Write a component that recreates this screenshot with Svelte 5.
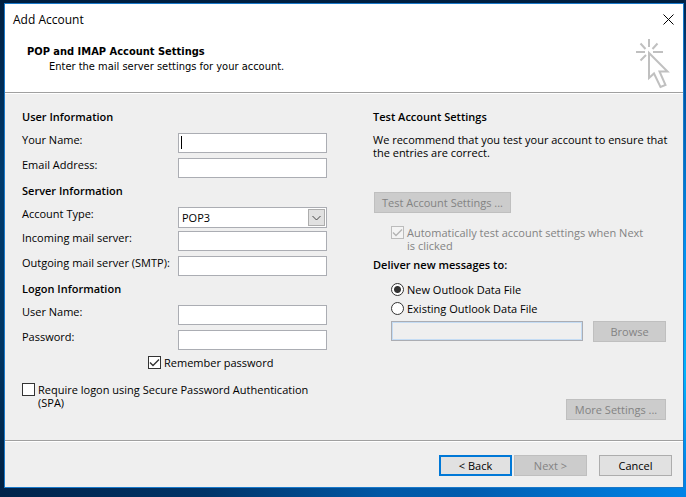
<script>
    let form = $state({
        name: '',
        email: '',
        type: 'POP3',
        incoming: '',
        outgoing: '',
        user: '',
        password: '',
        remember: true,
        spa: false,
        autoTest: true,
        deliver: 'new',
        dataFile: ''
    });
</script>

{#snippet tick()}
    <svg class="tick" viewBox="0 0 13 13" aria-hidden="true">
        <path d="M2 6.5L5 9.5L11 3.5" />
    </svg>
{/snippet}

<div class="desktop">
    <main class="dialog">
        <header class="top">
            <div class="title-bar">
                <h1>Add Account</h1>
                <button class="close" type="button" aria-label="Close">
                    <svg viewBox="0 0 11 11"><path d="M0.5 0.5L10.5 10.5M10.5 0.5L0.5 10.5" /></svg>
                </button>
            </div>
            <div class="banner">
                <div class="intro">
                    <h2>POP and IMAP Account Settings</h2>
                    <p>Enter the mail server settings for your account.</p>
                </div>
                <svg class="pointer" viewBox="0 0 34 50" aria-hidden="true">
                    <path d="M13 0V8M0 13H9M17 13H27M4.5 4.5L9.5 10M21.5 4.5L16.5 10M4.5 21.5L10 16" />
                    <path d="M13 14V39L18 34.5L24.5 48L29.5 46L23.5 32.5H31.5Z" />
                </svg>
            </div>
        </header>

        <form class="settings">
            <div class="column">
                <h3>User Information</h3>
                <div class="field">
                    <label for="name">Your Name:</label>
                    <input class="text caret" id="name" type="text" bind:value={form.name} />
                </div>
                <div class="field">
                    <label for="email">Email Address:</label>
                    <input class="text" id="email" type="text" bind:value={form.email} />
                </div>

                <h3>Server Information</h3>
                <div class="field type">
                    <label for="type">Account Type:</label>
                    <div class="select">
                        <select id="type" bind:value={form.type}>
                            <option>POP3</option>
                            <option>IMAP</option>
                        </select>
                        <span class="arrow">
                            <svg viewBox="0 0 9 6" aria-hidden="true"><path d="M0.5 1L4.5 5L8.5 1" /></svg>
                        </span>
                    </div>
                </div>
                <div class="field">
                    <label for="incoming">Incoming mail server:</label>
                    <input class="text" id="incoming" type="text" bind:value={form.incoming} />
                </div>
                <div class="field">
                    <label for="outgoing">Outgoing mail server (SMTP):</label>
                    <input class="text" id="outgoing" type="text" bind:value={form.outgoing} />
                </div>

                <h3>Logon Information</h3>
                <div class="field">
                    <label for="user">User Name:</label>
                    <input class="text" id="user" type="text" bind:value={form.user} />
                </div>
                <div class="field">
                    <label for="password">Password:</label>
                    <input class="text" id="password" type="password" bind:value={form.password} />
                </div>

                <label class="option remember">
                    <span class="box">
                        <input type="checkbox" bind:checked={form.remember} />
                        {@render tick()}
                    </span>
                    <span>Remember password</span>
                </label>
                <label class="option">
                    <span class="box">
                        <input type="checkbox" bind:checked={form.spa} />
                        {@render tick()}
                    </span>
                    <span>Require logon using Secure Password Authentication (SPA)</span>
                </label>
            </div>

            <div class="column">
                <h3>Test Account Settings</h3>
                <p class="advice">We recommend that you test your account to ensure that the entries are correct.</p>
                <button class="btn test" type="button" disabled>Test Account Settings ...</button>

                <label class="option indent auto">
                    <span class="box">
                        <input type="checkbox" bind:checked={form.autoTest} disabled />
                        {@render tick()}
                    </span>
                    <span>Automatically test account settings when Next is clicked</span>
                </label>

                <h3>Deliver new messages to:</h3>
                <label class="option indent radio">
                    <input type="radio" name="deliver" value="new" bind:group={form.deliver} />
                    <span>New Outlook Data File</span>
                </label>
                <label class="option indent radio">
                    <input type="radio" name="deliver" value="existing" bind:group={form.deliver} />
                    <span>Existing Outlook Data File</span>
                </label>
                <div class="browse">
                    <input class="text" type="text" aria-label="Data file" bind:value={form.dataFile} disabled />
                    <button class="btn" type="button" disabled>Browse</button>
                </div>

                <button class="btn more" type="button" disabled>More Settings ...</button>
            </div>
        </form>

        <footer class="actions">
            <button class="btn default" type="button">&lt; Back</button>
            <button class="btn" type="button" disabled>Next &gt;</button>
            <button class="btn cancel" type="button">Cancel</button>
        </footer>
    </main>
</div>

<style>
    :global(body) {
        margin: 0;
    }

    .desktop,
    .desktop * {
        box-sizing: border-box;
    }

    .desktop {
        min-height: 100vh;
        padding: 3px 2px 9px 4px;
        background:
            linear-gradient(#00234a 0%, #0055a4 18%, #0090ee 50%, #00b4fa 75%, #0084e8 95%) right / 2px 100% no-repeat,
            linear-gradient(90deg, #00234a, #003468 30%, #0058a6 56%, #005cae 68%, #0084e8) bottom / 100% 9px no-repeat,
            linear-gradient(#001f40, #003a6c 35%, #003562 70%, #001f40);
        color: #000;
        font: 11px/13px "Open Sans", "Noto Sans", sans-serif;
    }

    h1, h2, h3, p {
        margin: 0;
        font-size: 11px;
    }

    .dialog {
        border: 1px solid #1979ca;
        background: #efefef;
    }

    /* Title bar and banner */
    .top {
        background: #fff;
        border-bottom: 1px solid #a0a0a0;
    }

    .title-bar {
        display: flex;
        justify-content: space-between;
        align-items: center;
        height: 30px;
        padding: 0 9px 0 8px;
    }

    h1 {
        font-size: 12px;
        font-weight: 400;
    }

    .close {
        display: flex;
        padding: 0;
        border: none;
        background: none;
    }

    .close svg {
        width: 11px;
        height: 11px;
        fill: none;
        stroke: #000;
    }

    .banner {
        display: flex;
        justify-content: space-between;
        padding: 5px 13px 3px 22px;
    }

    .intro {
        padding-top: 5px;
        font-family: "DejaVu Sans Condensed", "DejaVu Sans", sans-serif;
        line-height: 15px;
    }

    .intro p {
        padding-left: 22px;
    }

    .pointer {
        width: 34px;
        height: 50px;
        fill: none;
        stroke: #c0c0c0;
        stroke-width: 2;
    }

    /* Form */
    .settings {
        display: grid;
        grid-template-columns: 61fr 60fr;
        column-gap: 46px;
        padding: 16px 10px 17px 17px;
        border-top: 1px solid #fff;
        border-bottom: 1px solid #a0a0a0;
    }

    .column {
        display: flex;
        flex-direction: column;
        min-width: 0;
    }

    h3 {
        height: 23px;
        font-weight: 600;
    }

    .field + h3 {
        height: 24px;
        padding-top: 1px;
    }

    .field {
        display: flex;
        justify-content: space-between;
        margin-bottom: 5px;
    }

    .field.type {
        margin-bottom: 3px;
    }

    .field label {
        white-space: nowrap;
    }

    .text,
    select {
        height: 20px;
        padding: 0 3px;
        border: 1px solid #abadb3;
        border-radius: 0;
        outline: none;
        background: #fff;
        color: #000;
        font: inherit;
    }

    .field .text,
    .select {
        width: 149px;
    }

    .field .caret {
        background: linear-gradient(#000, #000) 2px 2px / 1px 13px no-repeat #fff;
    }

    .select {
        position: relative;
        height: 21px;
    }

    select {
        display: block;
        width: 100%;
        height: 21px;
        appearance: none;
    }

    .arrow {
        position: absolute;
        top: 2px;
        right: 2px;
        display: flex;
        align-items: center;
        justify-content: center;
        width: 17px;
        height: 17px;
        border: 1px solid #adadad;
        background: #e1e1e1;
        pointer-events: none;
    }

    .arrow svg {
        width: 9px;
        height: 6px;
        fill: none;
        stroke: #444;
    }

    .option {
        display: flex;
        gap: 3px;
        margin-bottom: 14px;
    }

    .option.remember {
        margin-top: 1px;
        padding-left: 126px;
    }

    .option.indent {
        padding-left: 18px;
    }

    .option input {
        flex: none;
        display: block;
        width: 13px;
        height: 13px;
        margin: 0;
        border: 1px solid #333;
        background: #fff;
        appearance: none;
    }

    .box {
        position: relative;
        flex: none;
        height: 13px;
    }

    .tick {
        position: absolute;
        inset: 0;
        display: none;
        fill: none;
        stroke: #333;
        stroke-width: 1.4;
        pointer-events: none;
    }

    input:checked + .tick {
        display: block;
    }

    .option.auto {
        margin-bottom: 6px;
        padding-right: 24px;
        color: #838383;
    }

    .auto input {
        border-color: #bcbcbc;
        background: #f4f4f4;
    }

    .auto .tick {
        stroke: #b4b4b4;
    }

    .option.radio {
        margin-bottom: 6px;
    }

    .option.radio input {
        border-radius: 50%;
    }

    .option.radio input:checked {
        background: radial-gradient(circle, #333 3px, #fff 4px);
    }

    .auto + h3 {
        height: 25px;
    }

    .advice {
        margin-bottom: 33px;
    }

    .btn {
        min-width: 73px;
        height: 21px;
        padding: 0 7px;
        border: 1px solid #adadad;
        background: #e1e1e1;
        color: #000;
        font: inherit;
    }

    .btn:disabled {
        border-color: #bfbfbf;
        background: #ccc;
        color: #838383;
    }

    .test {
        align-self: flex-start;
        margin: 0 0 13px 1px;
    }

    .browse {
        display: flex;
        gap: 10px;
        padding: 0 7px 0 18px;
    }

    .browse .text {
        flex: 1;
        min-width: 0;
        background: #efefef;
        box-shadow: inset 0 0 0 1px #c4dcf4;
    }

    .more {
        align-self: flex-end;
        min-width: 100px;
        margin: auto 7px 3px 0;
    }

    .actions {
        display: flex;
        justify-content: flex-end;
        gap: 2px;
        padding: 13px 11px 11px;
        border-top: 1px solid #fff;
    }

    .btn.default {
        border: 2px solid #0078d7;
    }

    .cancel {
        margin-left: 10px;
    }
</style>
